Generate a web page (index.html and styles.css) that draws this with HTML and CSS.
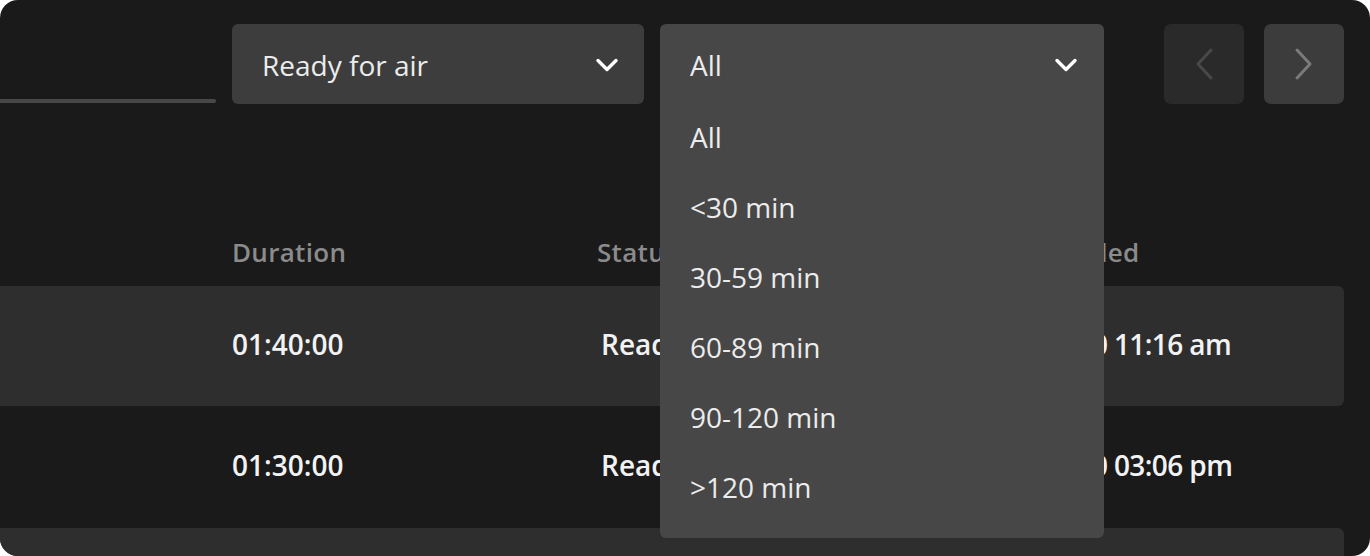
FILE: index.html
```html
<!DOCTYPE html>
<html lang="en">
<head>
<meta charset="utf-8">
<title>Episodes</title>
<link rel="stylesheet" href="styles.css">
</head>
<body>
<div class="card">
  <div class="toolbar">
    <div class="tab"><span class="tab-line"></span></div>
    <div class="select">
      <span class="select-label">Ready for air</span>
      <svg class="chev" width="24" height="16" viewBox="0 0 24 16"><path d="M3 3.5 L12 12.5 L21 3.5" fill="none" stroke="#fff" stroke-width="3.4" stroke-linecap="round" stroke-linejoin="round"/></svg>
    </div>
    <div class="select select-open">
      <span class="select-label">All</span>
      <svg class="chev" width="24" height="16" viewBox="0 0 24 16"><path d="M3 3.5 L12 12.5 L21 3.5" fill="none" stroke="#fff" stroke-width="3.4" stroke-linecap="round" stroke-linejoin="round"/></svg>
      <ul class="menu">
        <li>All</li>
        <li>&lt;30 min</li>
        <li>30-59 min</li>
        <li>60-89 min</li>
        <li>90-120 min</li>
        <li>&gt;120 min</li>
      </ul>
    </div>
    <div class="pager">
      <button class="page-btn disabled" aria-label="Previous">
        <svg width="20" height="34" viewBox="0 0 20 34"><path d="M17 3 L4 17 L17 31" fill="none" stroke="currentColor" stroke-width="3" stroke-linecap="round" stroke-linejoin="round"/></svg>
      </button>
      <button class="page-btn" aria-label="Next">
        <svg width="20" height="34" viewBox="0 0 20 34"><path d="M3 3 L16 17 L3 31" fill="none" stroke="currentColor" stroke-width="3" stroke-linecap="round" stroke-linejoin="round"/></svg>
      </button>
    </div>
  </div>

  <div class="table">
    <div class="thead">
      <span class="col col-dur">Duration</span>
      <span class="col col-status">Status</span>
      <span class="col col-date">Scheduled</span>
    </div>
    <div class="row shaded">
      <span class="col col-dur">01:40:00</span>
      <span class="col col-status val-status">Ready for air</span>
      <span class="col col-date">6/1/20 11:16 am</span>
    </div>
    <div class="row">
      <span class="col col-dur">01:30:00</span>
      <span class="col col-status val-status">Ready for air</span>
      <span class="col col-date">5/1/20 03:06 pm</span>
    </div>
    <div class="row shaded">
      <span class="col col-dur">01:20:00</span>
      <span class="col col-status val-status">Ready for air</span>
      <span class="col col-date">4/1/20 10:02 am</span>
    </div>
  </div>
</div>
</body>
</html>
```

FILE: styles.css
```css
* { box-sizing: border-box; }
html, body {
  margin: 0;
  padding: 0;
  background: #ffffff;
}
body {
  font-family: "Open Sans", Lato, "Liberation Sans", sans-serif;
  color: #ececec;
}
.card {
  width: 1370px;
  height: 556px;
  background: #1a1a1a;
  border-radius: 18px;
  overflow: hidden;
  position: relative;
}
.toolbar {
  display: flex;
  align-items: flex-start;
  padding-top: 24px;
  height: 104px;
}
.tab {
  width: 216px;
  height: 80px;
  display: flex;
  align-items: flex-end;
  flex-shrink: 0;
}
.tab-line {
  display: block;
  width: 222px;
  height: 4px;
  margin-left: -6px;
  background: #474747;
  border-radius: 2px;
  transform: translateY(-1px);
}
.select {
  position: relative;
  margin-left: 16px;
  width: 412px;
  height: 80px;
  background: #3d3d3d;
  border-radius: 6px;
  display: flex;
  align-items: center;
  justify-content: space-between;
  padding: 2px 25px 0 30px;
  flex-shrink: 0;
}
.select-open {
  width: 444px;
  background: #474747;
  border-radius: 6px 6px 0 0;
  z-index: 5;
  padding-right: 26px;
}
.select-label {
  font-size: 28px;
  color: #ececec;
  line-height: 1;
}
.chev { display: block; }
.menu {
  position: absolute;
  left: 0;
  top: 78px;
  width: 444px;
  margin: 0;
  padding: 0 0 16px 30px;
  list-style: none;
  background: #474747;
  border-radius: 0 0 6px 6px;
}
.menu li {
  height: 70px;
  display: flex;
  align-items: center;
  font-size: 28px;
  line-height: 1;
  color: #ececec;
}
.pager {
  display: flex;
  gap: 20px;
  margin-left: 60px;
}
.page-btn {
  width: 80px;
  height: 80px;
  border: 0;
  border-radius: 7px;
  background: #3c3c3c;
  color: #7a7a7a;
  display: flex;
  align-items: center;
  justify-content: center;
  padding: 0;
}
.page-btn.disabled {
  background: #2a2a2a;
  color: #494949;
}
.table {
  padding-top: 118px;
}
.thead {
  height: 64px;
  padding-bottom: 4px;
  display: flex;
  align-items: center;
}
.thead .col {
  font-size: 26px;
  font-weight: 600;
  letter-spacing: 0.3px;
  color: #8b8b8b;
}
.row {
  height: 120px;
  width: 1344px;
  padding-bottom: 4px;
  display: flex;
  align-items: center;
  margin-bottom: 1px;
  border-radius: 0 6px 6px 0;
}
.row.shaded { background: #2e2e2e; }
.row .col {
  font-size: 28px;
  font-weight: 600;
  color: #f2f2f2;
}
.col { display: block; white-space: nowrap; line-height: 1; }
.col-dur { width: 597px; padding-left: 232px; flex-shrink: 0; }
.col-status { width: 440px; flex-shrink: 0; }
.val-status { padding-left: 4px; }
.col-date { flex-shrink: 0; }
.thead .col-date { margin-left: -30px; }
.row .col-date { margin-left: -12px; letter-spacing: -0.6px; }
```
